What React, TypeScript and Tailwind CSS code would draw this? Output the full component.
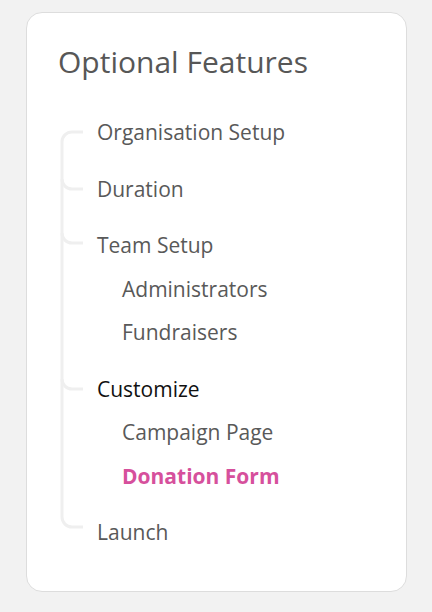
import React from 'react';

type Step = { label: string; sub?: boolean; state?: 'current' | 'active' };

const steps: Step[] = [
  { label: 'Organisation Setup' },
  { label: 'Duration' },
  { label: 'Team Setup' },
  { label: 'Administrators', sub: true },
  { label: 'Fundraisers', sub: true },
  { label: 'Customize', state: 'current' },
  { label: 'Campaign Page', sub: true },
  { label: 'Donation Form', sub: true, state: 'active' },
  { label: 'Launch' },
];

// tree connector, drawn in card coordinates
function Tree() {
  const x = 35;
  const end = 56;
  const r = 10;
  const branches = [176, 230, 376];
  const top = 119;
  const bottom = 514;
  return (
    <svg className="absolute left-0 top-0 pointer-events-none" width="120" height="580" fill="none">
      <path
        d={`M${end},${top} H${x + r} A${r},${r} 0 0 0 ${x},${top + r} V${bottom - r} A${r},${r} 0 0 0 ${x + r},${bottom} H${end}`}
        stroke="#efefef"
        strokeWidth="3"
      />
      {branches.map((y) => (
        <path
          key={y}
          d={`M${x},${y - r} A${r},${r} 0 0 0 ${x + r},${y} H${end}`}
          stroke="#efefef"
          strokeWidth="3"
        />
      ))}
    </svg>
  );
}

export default function App() {
  return (
    <div
      className="min-h-screen bg-[#f2f2f2] pt-[12px] pl-[26px]"
      style={{ fontFamily: '"Open Sans", "Noto Sans", sans-serif' }}
    >
      <div className="relative w-[381px] rounded-2xl border border-[#dddddd] bg-white pt-8 pl-8 pb-[36px]">
        <Tree />
        <h1 className="-ml-[1px] text-[30px] leading-[34px] text-[#575757]">Optional Features</h1>
        <ul className="mt-[32px]">
          {steps.map((s, i) => (
            <li
              key={s.label}
              className={
                'flex h-[43.5px] items-center text-[21px] ' +
                (s.sub ? 'pl-[63px] ' : 'pl-[38px] ') +
                (!s.sub && i > 0 ? 'mt-[13px] ' : '') +
                (s.state === 'active'
                  ? 'font-bold text-[#d6509c]'
                  : s.state === 'current'
                    ? 'text-[#111111]'
                    : 'text-[#595959]')
              }
            >
              {s.label}
            </li>
          ))}
        </ul>
      </div>
    </div>
  );
}
